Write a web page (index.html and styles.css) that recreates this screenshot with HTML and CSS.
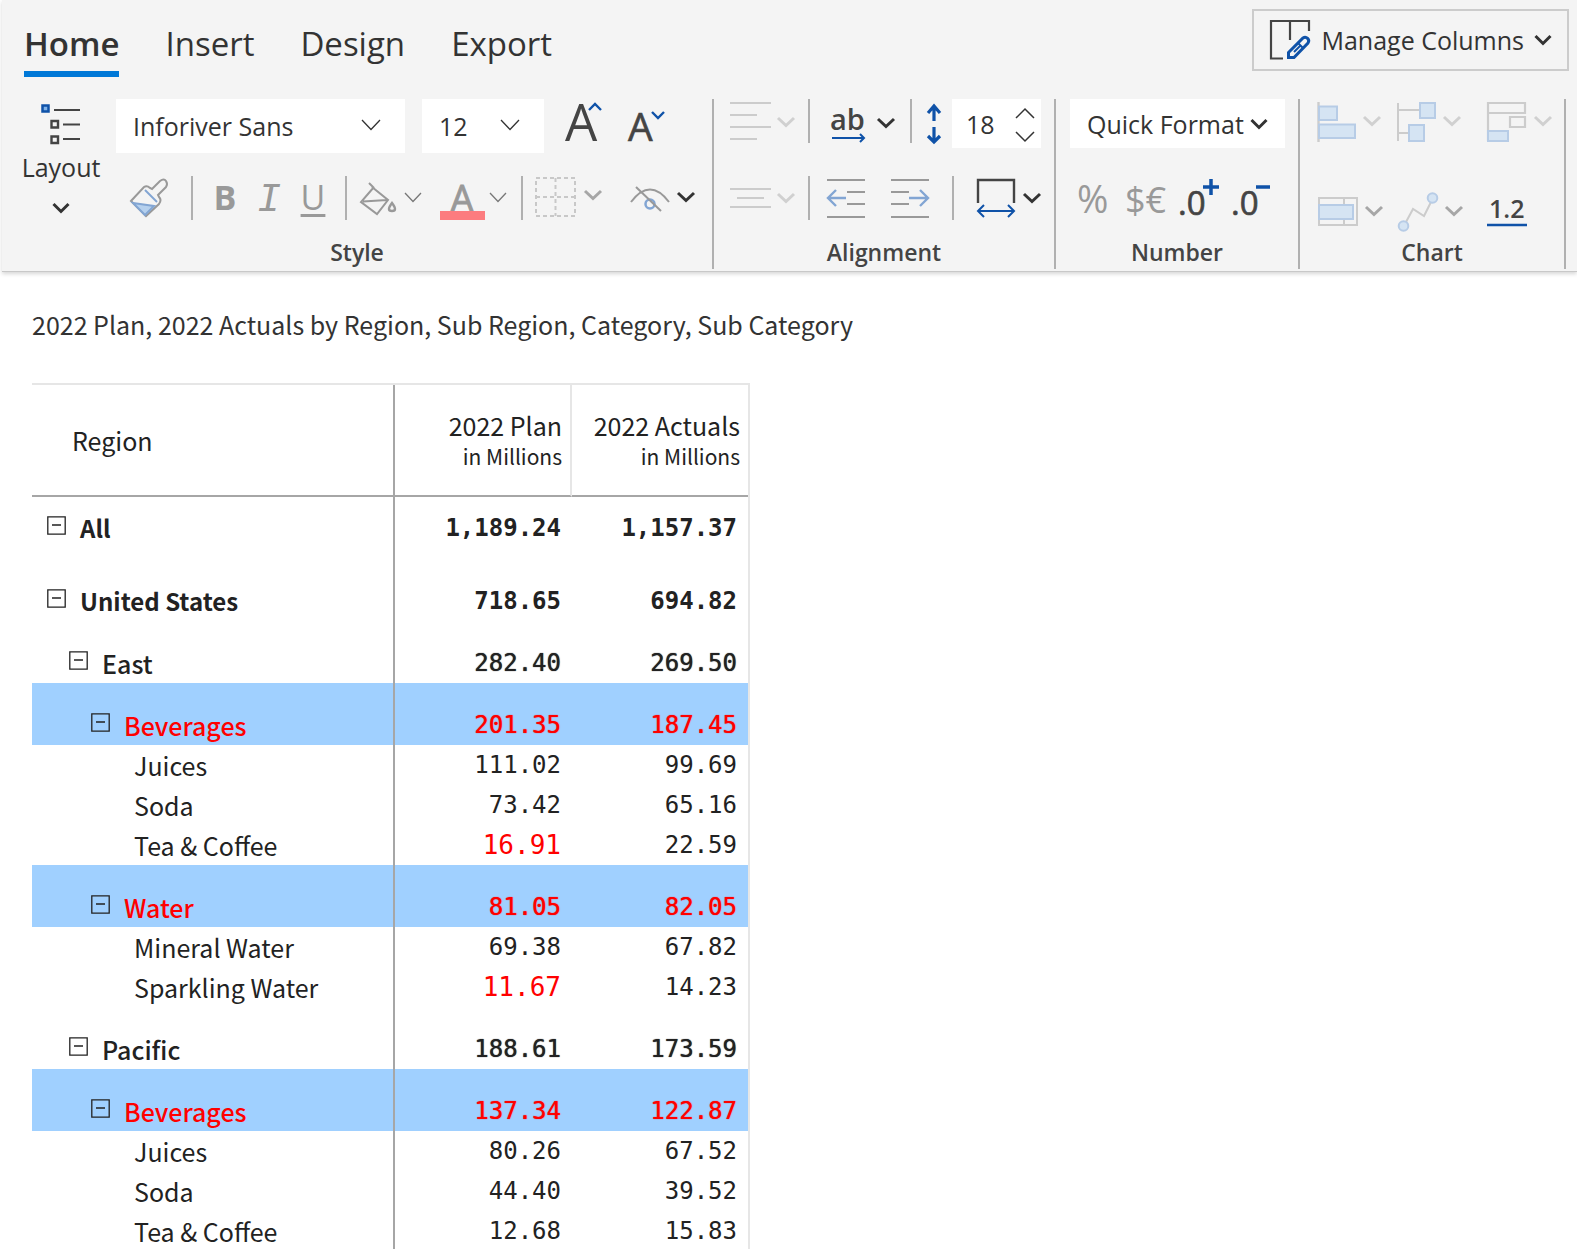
FILE: index.html
```html
<!DOCTYPE html>
<html lang="en">
<head>
<meta charset="utf-8">
<title>2022 Plan and Actuals</title>
<link rel="stylesheet" href="styles.css">
</head>
<body>
<svg class="defs" aria-hidden="true">
  <symbol id="chev" viewBox="0 0 18 12"><path d="M1.500 2 9 9.500 16.500 2" fill="none" stroke="currentColor" stroke-width="3"/></symbol>
  <symbol id="chev-thin" viewBox="0 0 20 12"><path d="M1 1 10 10.500 19 1" fill="none" stroke="currentColor" stroke-width="1.300"/></symbol>
  <symbol id="minus-box" viewBox="0 0 19 19"><path d="M.8.8h17.400v17.400H.8zM5 9h9" fill="none" stroke="#222" stroke-width="1.300"/></symbol>
</svg>
<header class="ribbon">
  <div class="ribbon-top">
    <nav class="tabs">
      <a class="tab active" href="#home">Home</a>
      <a class="tab" href="#insert">Insert</a>
      <a class="tab" href="#design">Design</a>
      <a class="tab" href="#export">Export</a>
    </nav>
    <button class="manage">
      <svg width="42" height="42" viewBox="0 0 42 42" fill="none"><path d="M14 39.500H2V2H40V12M21 2V21" stroke="#444" stroke-width="2.200"/><path d="M19.500 33.500 34 19a3.600 3.600 0 0 1 5 5L25 38.500H19.500Z" stroke="#0f52a8" stroke-width="3"/><path d="M29 24l5 5M25 33l7-7" stroke="#0f52a8" stroke-width="2"/></svg>
      <span>Manage Columns</span>
      <svg class="chev"><use href="#chev"/></svg>
    </button>
  </div>
  <div class="groups">
    <section class="group style-group">
      <button class="layout">
        <svg width="40" height="42" viewBox="0 0 40 42" fill="none" stroke-width="2"><rect x="1.500" y="1.500" width="6" height="6" fill="#7fb2e8" stroke="#0f52a8" stroke-width="2.500"/><path d="M13 6H39M22 20.500H39M22 35H39" stroke="#444"/><path d="M10.500 17h6.500v6.500h-6.500zM10.500 32.500h6.500v6.500h-6.500z" stroke="#444" stroke-width="2.400"/></svg>
        <span>Layout</span>
        <svg class="chev"><use href="#chev"/></svg>
      </button>
      <div class="row first">
        <label class="field font-field"><select aria-label="Font"><option>Inforiver Sans</option></select><svg class="thin"><use href="#chev-thin"/></svg></label>
        <label class="field size-field"><select aria-label="Font size"><option>12</option></select><svg class="thin"><use href="#chev-thin"/></svg></label>
        <button class="tool" aria-label="Grow font"><svg width="46" height="48" viewBox="0 0 46 48"><text class="glyph" x="4" y="42" font-size="51">A</text><path d="M28 11 34 5 40 11" fill="none" stroke="#0f52a8" stroke-width="2.400"/></svg></button>
        <button class="tool" aria-label="Shrink font"><svg width="43" height="48" viewBox="0 0 43 48"><text class="glyph" x="4" y="42" font-size="39" stroke="#444" stroke-width=".6">A</text><path d="M28 13 34 19 40 13" fill="none" stroke="#0f52a8" stroke-width="2.400"/></svg></button>
      </div>
      <div class="row second">
        <button class="tool" aria-label="Format painter"><svg width="65" height="44" viewBox="0 0 65 44" fill="none" stroke-width="2"><path d="M15 25 28 11q3-2 6 1l2 1 8-8q4-3 6 0t0 6l-8 8 1 2q3 3 0 7L30 40Z" stroke="#999"/><path d="M17 27 38 30 29 39Z" fill="#b5d0ee" stroke="#82a5d3"/><path d="M29 14 41 26" stroke="#82a5d3"/></svg></button>
        <span class="sep"></span>
        <button class="tool letter bold">B</button>
        <button class="tool letter italic">I</button>
        <button class="tool letter underline">U</button>
        <span class="sep"></span>
        <button class="tool" aria-label="Fill colour"><svg width="80" height="44" viewBox="0 0 80 44" fill="none" stroke="#999" stroke-width="2"><path d="M15 11 31 24 20 38 4 26 17 11M12 7l5 5M6 25.500 30 24"/><path d="M35 27q-6 8 0 8 6 0 0-8Z" stroke-width="2.400"/><path d="M48 17 56 25.500 64 17" stroke="#777" stroke-width="1.300"/></svg></button>
        <button class="tool" aria-label="Font colour"><svg width="74" height="44" viewBox="0 0 74 44"><text x="13" y="37" font-size="38" class="glyph grey" stroke="#999" stroke-width=".8">A</text><path d="M3 35h45v9H3z" fill="#fc7c7f"/><path d="M53 17 61 25.500 69 17" fill="none" stroke="#777" stroke-width="1.300"/></svg></button>
        <span class="sep"></span>
        <button class="tool" aria-label="Borders"><svg width="84" height="44" viewBox="0 0 84 44" fill="none"><path d="M3 2H42V40H3ZM22.500 2V40M3 21H42" stroke="#c8c8c8" stroke-width="2" stroke-dasharray="4 3"/><path d="M52 15 60 22.500 68 15" stroke="#a6a6a6" stroke-width="3"/></svg></button>
        <button class="tool" aria-label="Hide"><svg width="82" height="44" viewBox="0 0 82 44" fill="none" stroke="#999" stroke-width="2"><path d="M14 26Q33 1 52 26"/><circle cx="33" cy="28" r="4.500" stroke="#82a5d3" stroke-width="2.500"/><path d="M19 11 44 35"/><path d="M61 17 69 24.500 77 17" stroke="#333" stroke-width="3"/></svg></button>
      </div>
      <h2>Style</h2>
    </section>

    <section class="group align-group">
      <div class="row first">
        <button class="tool" aria-label="Horizontal align"><svg width="68" height="44" viewBox="0 0 68 44" fill="none"><path d="M0 4H41M0 16H27M0 28H41M0 40H27" stroke="#ccc" stroke-width="2.200"/><path d="M48 19 56 26.500 64 19" stroke="#d0d0d0" stroke-width="3"/></svg></button>
        <span class="sep"></span>
        <button class="tool" aria-label="Text overflow"><svg width="80" height="44" viewBox="0 0 80 44" fill="none"><text class="glyph semi" x="10" y="31" font-size="29">ab</text><path d="M12 39H44M40 35l4 4-4 4" stroke="#0f52a8" stroke-width="2"/><path d="M58 20 66 27.500 74 20" stroke="#333" stroke-width="3"/></svg></button>
        <span class="sep"></span>
        <svg class="height-icon" width="30" height="46" viewBox="0 0 30 46" fill="none" stroke="#0f52a8" stroke-width="3.200"><path d="M12 22V7M6 14 12 7 18 14M12 28V43M6 37 12 43 18 37"/></svg>
        <label class="field row-field"><input aria-label="Row height" value="18"><svg class="spin" viewBox="0 0 20 36"><path d="M1 11 10 2 19 11M1 25 10 34 19 25" fill="none" stroke="#333" stroke-width="1.500"/></svg></label>
      </div>
      <div class="row second">
        <button class="tool" aria-label="Vertical align"><svg width="68" height="44" viewBox="0 0 68 44" fill="none"><path d="M0 13H41M7 22H34M0 31H41" stroke="#ccc" stroke-width="2.200"/><path d="M48 18 56 25.500 64 18" stroke="#d0d0d0" stroke-width="3"/></svg></button>
        <span class="sep"></span>
        <button class="tool" aria-label="Decrease indent"><svg width="62" height="44" viewBox="0 0 62 44" fill="none" stroke="#999" stroke-width="2.200"><path d="M7 4H45M27 16H45M27 28H45M7 41H45"/><path d="M26 22H8M16 14 8 22 16 30" stroke="#82a5d3" stroke-width="2.400"/></svg></button>
        <button class="tool" aria-label="Increase indent"><svg width="60" height="44" viewBox="0 0 60 44" fill="none" stroke="#999" stroke-width="2.200"><path d="M9 4H47M9 16H27M9 28H27M9 41H47"/><path d="M27 22H46M38 14 46 22 38 30" stroke="#82a5d3" stroke-width="2.400"/></svg></button>
        <span class="sep"></span>
        <button class="tool" aria-label="Column width"><svg width="80" height="44" viewBox="0 0 80 44" fill="none"><path d="M14 27V4H50V27" stroke="#444" stroke-width="2.400"/><path d="M14 35H50M20 29 14 35 20 41M44 29 50 35 44 41" stroke="#0f52a8" stroke-width="2"/><path d="M60 18 68 25.500 76 18" stroke="#333" stroke-width="3"/></svg></button>
      </div>
      <h2>Alignment</h2>
    </section>

    <section class="group number-group">
      <div class="row first">
        <label class="field quick-field"><select aria-label="Quick Format"><option>Quick Format</option></select><svg class="chev"><use href="#chev"/></svg></label>
      </div>
      <div class="row second">
        <button class="tool" aria-label="Percent"><svg width="46" height="44" viewBox="0 0 46 44"><text class="glyph grey" x="7" y="37" font-size="38">%</text></svg></button>
        <button class="tool" aria-label="Currency"><svg width="58" height="44" viewBox="0 0 58 44"><text class="glyph grey" x="9" y="37" font-size="36">$€</text></svg></button>
        <button class="tool" aria-label="Increase decimals"><svg width="54" height="44" viewBox="0 0 54 44"><text class="glyph" x="4" y="39" font-size="33" stroke="#444" stroke-width=".7">.0</text><path d="M29 11H45M37 3V19" stroke="#0f52a8" stroke-width="3.500"/></svg></button>
        <button class="tool" aria-label="Decrease decimals"><svg width="54" height="44" viewBox="0 0 54 44"><text class="glyph" x="3" y="39" font-size="33" stroke="#444" stroke-width=".7">.0</text><path d="M28 11H42" stroke="#0f52a8" stroke-width="3.500"/></svg></button>
      </div>
      <h2>Number</h2>
    </section>

    <section class="group chart-group">
      <div class="row first">
        <button class="tool" aria-label="Bar chart"><svg width="80" height="44" viewBox="0 0 80 44" fill="none"><path d="M2.500 3V43" stroke="#ccc" stroke-width="2.400"/><path d="M3 7.500H21V21H3ZM3 25.500H39V39H3Z" fill="#d5e4f3" stroke="#b7cce6" stroke-width="2"/><path d="M48 18 56 25.500 64 18" stroke="#d0d0d0" stroke-width="3"/></svg></button>
        <button class="tool" aria-label="Variance chart"><svg width="90" height="44" viewBox="0 0 90 44" fill="none"><path d="M2 4V42M2 11H24M2 34H12" stroke="#ccc" stroke-width="2"/><path d="M24 4H39V19H24ZM13 26H28V42H13Z" fill="#d5e4f3" stroke="#b7cce6" stroke-width="2"/><path d="M48 18 56 25.500 64 18" stroke="#d0d0d0" stroke-width="3"/></svg></button>
        <button class="tool" aria-label="Waterfall chart"><svg width="66" height="44" viewBox="0 0 66 44" fill="none"><path d="M2 42V4H39V14H2M24 18H39V28H24Z" stroke="#ccc" stroke-width="2.200"/><path d="M2 32H22V42H2Z" fill="#d5e4f3" stroke="#b7cce6" stroke-width="2"/><path d="M49 18 57 25.500 65 18" stroke="#d0d0d0" stroke-width="3"/></svg></button>
      </div>
      <div class="row second">
        <button class="tool" aria-label="Bullet chart"><svg width="80" height="56" viewBox="0 0 80 56" fill="none"><path d="M3 22H41V49H3ZM28 22V49" stroke="#ccc" stroke-width="2"/><path d="M3 29H37V43H3Z" fill="#d5e4f3" stroke="#b7cce6" stroke-width="2"/><path d="M50 31 58 38.500 66 31" stroke="#a6a6a6" stroke-width="3"/></svg></button>
        <button class="tool" aria-label="Sparkline"><svg width="90" height="56" viewBox="0 0 90 56" fill="none"><path d="M10 46 17 33 28 40 35 26" stroke="#ccc" stroke-width="2"/><g fill="#d5e4f3" stroke="#b7cce6" stroke-width="2"><circle cx="7.500" cy="50" r="4.800"/><circle cx="36.500" cy="22" r="4.800"/></g><path d="M50 31 58 38.500 66 31" stroke="#a6a6a6" stroke-width="3"/></svg></button>
        <button class="tool" aria-label="Data labels"><svg width="66" height="56" viewBox="0 0 66 56"><text class="glyph semi" x="3" y="42" font-size="25">1.2</text><path d="M1 49H41" stroke="#0f52a8" stroke-width="2.400"/></svg></button>
      </div>
      <h2>Chart</h2>
    </section>
  </div>
</header>

<main>
  <h1>2022 Plan, 2022 Actuals by Region, Sub Region, Category, Sub Category</h1>
  <table>
    <colgroup><col class="c-region"><col class="c-plan"><col class="c-act"></colgroup>
    <thead>
      <tr><th scope="col">Region</th><th scope="col">2022 Plan<small>in Millions</small></th><th scope="col">2022 Actuals<small>in Millions</small></th></tr>
    </thead>
    <tbody>
      <tr class="total all"><th scope="row"><svg><use href="#minus-box"/></svg>All</th><td>1,189.24</td><td>1,157.37</td></tr>
      <tr class="total"><th scope="row"><svg><use href="#minus-box"/></svg>United States</th><td>718.65</td><td>694.82</td></tr>
      <tr class="area"><th scope="row"><svg><use href="#minus-box"/></svg>East</th><td>282.40</td><td>269.50</td></tr>
      <tr class="category"><th scope="row"><svg><use href="#minus-box"/></svg>Beverages</th><td>201.35</td><td>187.45</td></tr>
      <tr class="leaf"><th scope="row">Juices</th><td>111.02</td><td>99.69</td></tr>
      <tr class="leaf"><th scope="row">Soda</th><td>73.42</td><td>65.16</td></tr>
      <tr class="leaf"><th scope="row">Tea &amp; Coffee</th><td class="low">16.91</td><td>22.59</td></tr>
      <tr class="category"><th scope="row"><svg><use href="#minus-box"/></svg>Water</th><td>81.05</td><td>82.05</td></tr>
      <tr class="leaf"><th scope="row">Mineral Water</th><td>69.38</td><td>67.82</td></tr>
      <tr class="leaf"><th scope="row">Sparkling Water</th><td class="low">11.67</td><td>14.23</td></tr>
      <tr class="area"><th scope="row"><svg><use href="#minus-box"/></svg>Pacific</th><td>188.61</td><td>173.59</td></tr>
      <tr class="category"><th scope="row"><svg><use href="#minus-box"/></svg>Beverages</th><td>137.34</td><td>122.87</td></tr>
      <tr class="leaf"><th scope="row">Juices</th><td>80.26</td><td>67.52</td></tr>
      <tr class="leaf"><th scope="row">Soda</th><td>44.40</td><td>39.52</td></tr>
      <tr class="leaf"><th scope="row">Tea &amp; Coffee</th><td>12.68</td><td>15.83</td></tr>
    </tbody>
  </table>
</main>
</body>
</html>
```
FILE: styles.css
```css
* { box-sizing: border-box; }
body {
  margin: 0;
  height: 100vh;
  overflow: hidden;
  background: #fff;
  color: #333;
  font-family: "Open Sans", "Noto Sans", sans-serif;
  font-size: 25px;
}
svg { display: block; flex: none; overflow: visible; }
.defs { position: absolute; width: 0; height: 0; }
button, select, input {
  margin: 0;
  padding: 0;
  border: 0;
  border-radius: 0;
  background: none;
  color: inherit;
  font: inherit;
  appearance: none;
}

/* Ribbon */
.ribbon {
  margin-left: 2px;
  background: #f4f4f4;
  border-bottom: 1px solid #c8c8c8;
  box-shadow: 0 2px 4px rgba(0, 0, 0, .16);
}
.ribbon-top {
  display: flex;
  justify-content: space-between;
  align-items: flex-start;
  height: 99px;
  padding: 9px 8px 0 22px;
}
.tabs { display: flex; gap: 46px; }
.tab {
  height: 68px;
  padding-top: 11px;
  color: #333;
  font-size: 33px;
  line-height: 48px;
  text-decoration: none;
}
.tab.active { font-weight: 600; border-bottom: 6px solid #0078d7; }
.manage {
  display: flex;
  align-items: center;
  gap: 10px;
  height: 62px;
  padding: 0 15px;
  border: 2px solid #ccc;
}
.chev { width: 18px; height: 12px; color: #333; }
.groups { display: flex; height: 172px; }
.layout {
  grid-row: 1 / 3;
  display: flex;
  flex-direction: column;
  align-items: center;
  padding: 5px 0 0 4px;
  line-height: 34px;
}
.layout span { margin: 4px 0 18px; }
.group {
  display: flex;
  flex-direction: column;
  height: 170px;
  border-right: 2px solid #b0b0b0;
}
.row { display: flex; }
.row.first { height: 77px; }
.row.second { height: 60px; }
.group h2 {
  margin: 0;
  font-size: 23px;
  font-weight: 600;
  line-height: 32px;
  text-align: center;
  color: #444;
}
.tool { display: flex; align-items: flex-start; }
.sep { width: 2px; height: 44px; margin: 0 10px; background: #b0b0b0; }
.field { position: relative; display: flex; background: #fff; }
.field select, .field input { width: 100%; padding: 0 17px; }
.field svg { position: absolute; pointer-events: none; }
.thin { width: 20px; height: 12px; top: 20px; right: 24px; color: #333; }
.font-field { width: 289px; height: 54px; }
.size-field { width: 122px; height: 54px; }
.style-group {
  display: grid;
  grid-template: 77px 60px 32px / 114px 596px;
}
.style-group .first { gap: 17px; }
.style-group h2 { grid-column: 1 / 3; }
.letter { justify-content: center; width: 44px; color: #999; font-size: 34px; line-height: 42px; }
.bold { font-weight: 700; }
.italic { font-family: "Liberation Mono", monospace; font-style: italic; font-size: 40px; line-height: 50px; }
.underline { text-decoration: underline; text-underline-offset: 4px; }
.align-group { width: 342px; }
.align-group .row, .chart-group .row { padding-left: 16px; }
.row-field { width: 89px; height: 49px; }
.field.row-field input { padding: 0 14px; }
.spin { width: 20px; height: 36px; top: 8px; right: 6px; }
.number-group { width: 244px; }
.number-group .row { padding-left: 14px; }
.quick-field { width: 215px; height: 49px; }
.quick-field .chev { top: 19px; right: 17px; }
.chart-group { width: 266px; }
.glyph { font-family: "Open Sans", "Noto Sans", sans-serif; fill: #444; }
.glyph.grey { fill: #999; }
.glyph.semi { font-weight: 600; }

/* Report */
main { padding: 34px 32px 0; font-family: "Noto Sans CJK SC", "Noto Sans", sans-serif; color: #222; }
h1 { margin: 0 0 41px; font-size: 25px; font-weight: 400; line-height: 36px; color: #333; }
table { border-collapse: separate; border-spacing: 0; table-layout: fixed; width: 718px; border-top: 2px solid #e6e6e6; border-right: 2px solid #e6e6e6; font-size: 25px; }
.c-region { width: 363px; }
.c-plan { width: 177px; }
.c-act { width: 176px; }
th, td { padding: 0; font-weight: 400; line-height: 40px; }
thead th { height: 112px; border-bottom: 2px solid #a6a6a6; line-height: 32px; text-align: right; padding-right: 8px; }
thead th:first-child { text-align: left; padding-left: 40px; }
thead th:nth-child(2) { border-right: 2px solid #e6e6e6; }
th:first-child { border-right: 2px solid #a6a6a6; }
small { display: block; font-size: 21px; line-height: 30px; }
tbody th { text-align: left; padding-left: 102px; }
tbody th svg { float: left; width: 19px; height: 19px; margin: 8px 14px 0 0; }
td { text-align: right; font-family: "DejaVu Sans Mono", monospace; font-size: 24px; padding-right: 11px; }
.total th, .total td, .area th, .area td, .category th, .category td { padding-top: 22px; }
.total.all th, .total.all td { padding-top: 11px; padding-bottom: 11px; }
.total th, .total td { font-weight: 700; }
.total th { padding-left: 15px; font-size: 24px; }
.area th { padding-left: 37px; font-weight: 500; }
.category th { padding-left: 59px; font-weight: 500; }
.category { background: #a0d0ff; color: #f00; }
.area td, .category td { text-shadow: 0 0 1px currentColor; }
.low { color: #f00; font-size: 26px; }
```
